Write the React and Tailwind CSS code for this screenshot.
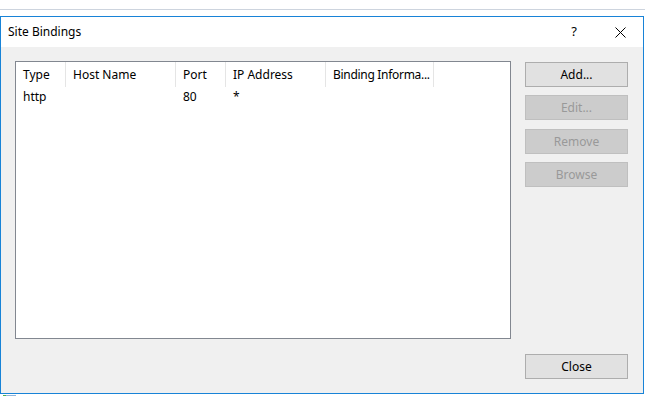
import React from "react";

const columns = [
  { label: "Type", width: "w-[50px]", extra: "" },
  { label: "Host Name", width: "w-[110px]", extra: "" },
  { label: "Port", width: "w-[50px]", extra: "" },
  { label: "IP Address", width: "w-[100px]", extra: "" },
  { label: "Binding Informa...", width: "w-[108px]", extra: "tracking-[-0.3px]" },
];

const bindings = [{ type: "http", host: "", port: "80", ip: "*", info: "" }];

const DialogButton = ({ label, disabled, className = "" }) => (
  <button
    disabled={disabled}
    className={`w-[103px] h-[25px] border text-[12px] leading-none ${
      disabled
        ? "bg-[#cccccc] border-[#bfbfbf] text-[#999999]"
        : "bg-[#e1e1e1] border-[#adadad] text-black"
    } ${className}`}
  >
    {label}
  </button>
);

const App = () => {
  return (
    <div
      className="w-[645px] h-[396px] bg-white overflow-hidden flex flex-col text-black"
      style={{ fontFamily: '"Noto Sans", "Open Sans", sans-serif' }}
    >
      <div className="h-[9px] shrink-0" />
      <div className="h-px bg-[#cdd4de] shrink-0" />
      <div className="h-[6px] shrink-0" />

      {/* dialog window */}
      <div className="w-[644px] h-[378px] shrink-0 border border-[#1883d7] flex flex-col">
        {/* title bar */}
        <div className="h-[30px] shrink-0 bg-white flex items-center pl-[7px] text-[12px]">
          <span className="flex-1">Site Bindings</span>
          <span className="w-[10px] text-center mr-[36px] text-[13px]">?</span>
          <svg width="11" height="11" viewBox="0 0 11 11" className="mr-[17px]">
            <path d="M0.5 0.5 L10.5 10.5 M10.5 0.5 L0.5 10.5" stroke="#000" strokeWidth="1" />
          </svg>
        </div>

        {/* body */}
        <div className="flex-1 bg-[#f0f0f0] flex pt-[14px] pl-[14px] pr-[14px] pb-[14px]">
          {/* list view */}
          <div className="w-[496px] h-[278px] border border-[#828790] bg-white text-[12px]">
            <div className="flex h-[25px]">
              {columns.map((col) => (
                <div
                  key={col.label}
                  className={`${col.width} ${col.extra} h-full pl-[7px] flex items-center border-r border-[#e5e5e5] whitespace-nowrap overflow-hidden`}
                >
                  {col.label}
                </div>
              ))}
            </div>
            {bindings.map((b, i) => (
              <div key={i} className="flex h-[20px] items-center">
                <div className="w-[50px] pl-[7px]">{b.type}</div>
                <div className="w-[110px] pl-[7px]">{b.host}</div>
                <div className="w-[50px] pl-[7px]">{b.port}</div>
                <div className="w-[100px] pl-[7px]">{b.ip}</div>
                <div className="w-[108px] pl-[7px]">{b.info}</div>
              </div>
            ))}
          </div>

          {/* buttons */}
          <div className="ml-[14px] flex flex-col">
            <DialogButton label="Add..." className="mt-px" />
            <DialogButton label="Edit..." disabled className="mt-[8px]" />
            <DialogButton label="Remove" disabled className="mt-[9px]" />
            <DialogButton label="Browse" disabled className="mt-[8px]" />
            <div className="flex-1" />
            <DialogButton label="Close" />
          </div>
        </div>
      </div>

      {/* taskbar sliver */}
      <div className="flex h-[2px] mt-px pl-[3px]">
        <div className="w-[3px] bg-[#4caf50]" />
        <div className="w-[10px] bg-[#8fb4d9]" />
      </div>
    </div>
  );
};

export default App;
